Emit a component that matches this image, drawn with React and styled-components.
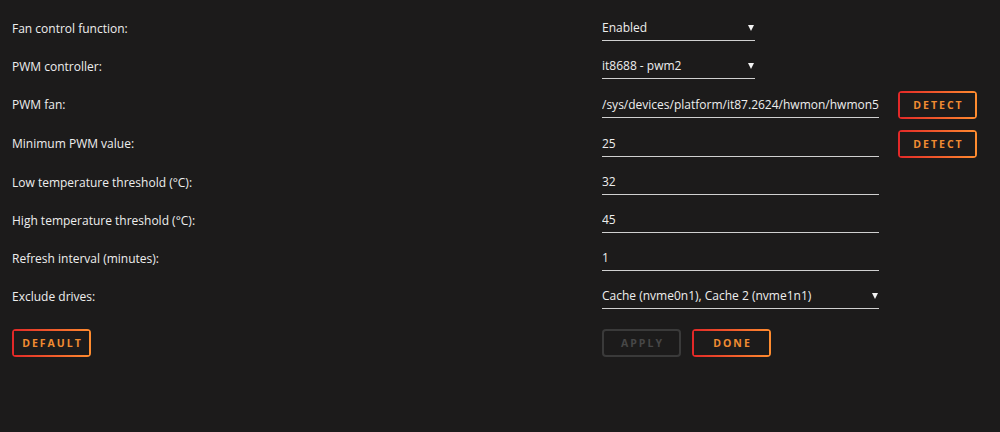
import React from "react";
import styled, { createGlobalStyle, css } from "styled-components";

const GlobalStyle = createGlobalStyle`
  html, body { margin: 0; padding: 0; }
  body {
    background: #1c1b1b;
    color: #f2f2f2;
    font-family: "Open Sans", "Liberation Sans", sans-serif;
    font-size: 12px;
  }
`;

const Page = styled.div`
  padding: 9px 12px 0 12px;
  min-height: 423px;
  background: #1c1b1b;
`;

const Row = styled.div`
  display: grid;
  grid-template-columns: 590px 1fr;
  align-items: center;
  height: ${(p) => (p.$tall ? "39px" : "38px")};
`;

const Label = styled.div`
  font-size: 12px;
  color: #eeeeee;
`;

const Field = styled.div`
  display: flex;
  align-items: center;
  gap: 19px;
`;

const TextInput = styled.input`
  box-sizing: border-box;
  width: 277px;
  height: 26px;
  padding: 0;
  margin: 0;
  border: none;
  border-bottom: 1px solid #d0d0d0;
  background: transparent;
  color: #eeeeee;
  font-family: "Open Sans", "Liberation Sans", sans-serif;
  font-size: 12px;
  outline: none;
`;

const SelectBox = styled.div`
  box-sizing: border-box;
  width: ${(p) => (p.$wide ? "277px" : "153px")};
  height: 26px;
  display: flex;
  align-items: center;
  justify-content: space-between;
  padding-right: 1px;
  border-bottom: 1px solid #d0d0d0;
  color: #eeeeee;
  font-size: 12px;
`;

const Caret = styled.svg`
  width: 6px;
  height: 6px;
  margin-top: 1px;
`;

const Button = styled.button`
  box-sizing: border-box;
  width: 79px;
  height: 28px;
  padding: 0;
  margin: 0;
  border: none;
  border-radius: 4px;
  font-family: "Open Sans", "Liberation Sans", sans-serif;
  font-size: 10.5px;
  font-weight: 700;
  letter-spacing: 2px;
  text-transform: uppercase;
  text-indent: 2px;
  cursor: pointer;
  color: #f08c32;
  background:
    linear-gradient(90deg, #e22828, #ff8c2f) 0 0 / 100% 2px no-repeat,
    linear-gradient(90deg, #e22828, #ff8c2f) 0 100% / 100% 2px no-repeat,
    linear-gradient(#e22828, #e22828) 0 0 / 2px 100% no-repeat,
    linear-gradient(#ff8c2f, #ff8c2f) 100% 0 / 2px 100% no-repeat,
    transparent;
  ${(p) =>
    p.disabled &&
    css`
      color: #474747;
      cursor: default;
      background: transparent;
      box-shadow: inset 0 0 0 2px #3a3a3a;
    `}
`;

const ButtonRow = styled.div`
  display: grid;
  grid-template-columns: 590px 1fr;
  align-items: center;
  margin-top: 14px;
`;

const ButtonGroup = styled.div`
  display: flex;
  gap: 11px;
`;

const CaretIcon = () => (
  <Caret viewBox="0 0 6 6">
    <polygon points="0,0 6,0 3,6" fill="#f2f2f2" />
  </Caret>
);

const Select = ({ value, wide }) => (
  <SelectBox $wide={wide}>
    <span>{value}</span>
    <CaretIcon />
  </SelectBox>
);

export default function App() {
  return (
    <>
      <GlobalStyle />
      <Page>
        <Row>
          <Label>Fan control function:</Label>
          <Field>
            <Select value="Enabled" />
          </Field>
        </Row>
        <Row>
          <Label>PWM controller:</Label>
          <Field>
            <Select value="it8688 - pwm2" />
          </Field>
        </Row>
        <Row $tall>
          <Label>PWM fan:</Label>
          <Field>
            <TextInput readOnly defaultValue="/sys/devices/platform/it87.2624/hwmon/hwmon5/pwm2" />
            <Button>Detect</Button>
          </Field>
        </Row>
        <Row $tall>
          <Label>Minimum PWM value:</Label>
          <Field>
            <TextInput readOnly defaultValue="25" />
            <Button>Detect</Button>
          </Field>
        </Row>
        <Row>
          <Label>Low temperature threshold (°C):</Label>
          <Field>
            <TextInput readOnly defaultValue="32" />
          </Field>
        </Row>
        <Row>
          <Label>High temperature threshold (°C):</Label>
          <Field>
            <TextInput readOnly defaultValue="45" />
          </Field>
        </Row>
        <Row>
          <Label>Refresh interval (minutes):</Label>
          <Field>
            <TextInput readOnly defaultValue="1" />
          </Field>
        </Row>
        <Row>
          <Label>Exclude drives:</Label>
          <Field>
            <Select wide value="Cache (nvme0n1), Cache 2 (nvme1n1)" />
          </Field>
        </Row>
        <ButtonRow>
          <div>
            <Button>Default</Button>
          </div>
          <ButtonGroup>
            <Button disabled>Apply</Button>
            <Button>Done</Button>
          </ButtonGroup>
        </ButtonRow>
      </Page>
    </>
  );
}
